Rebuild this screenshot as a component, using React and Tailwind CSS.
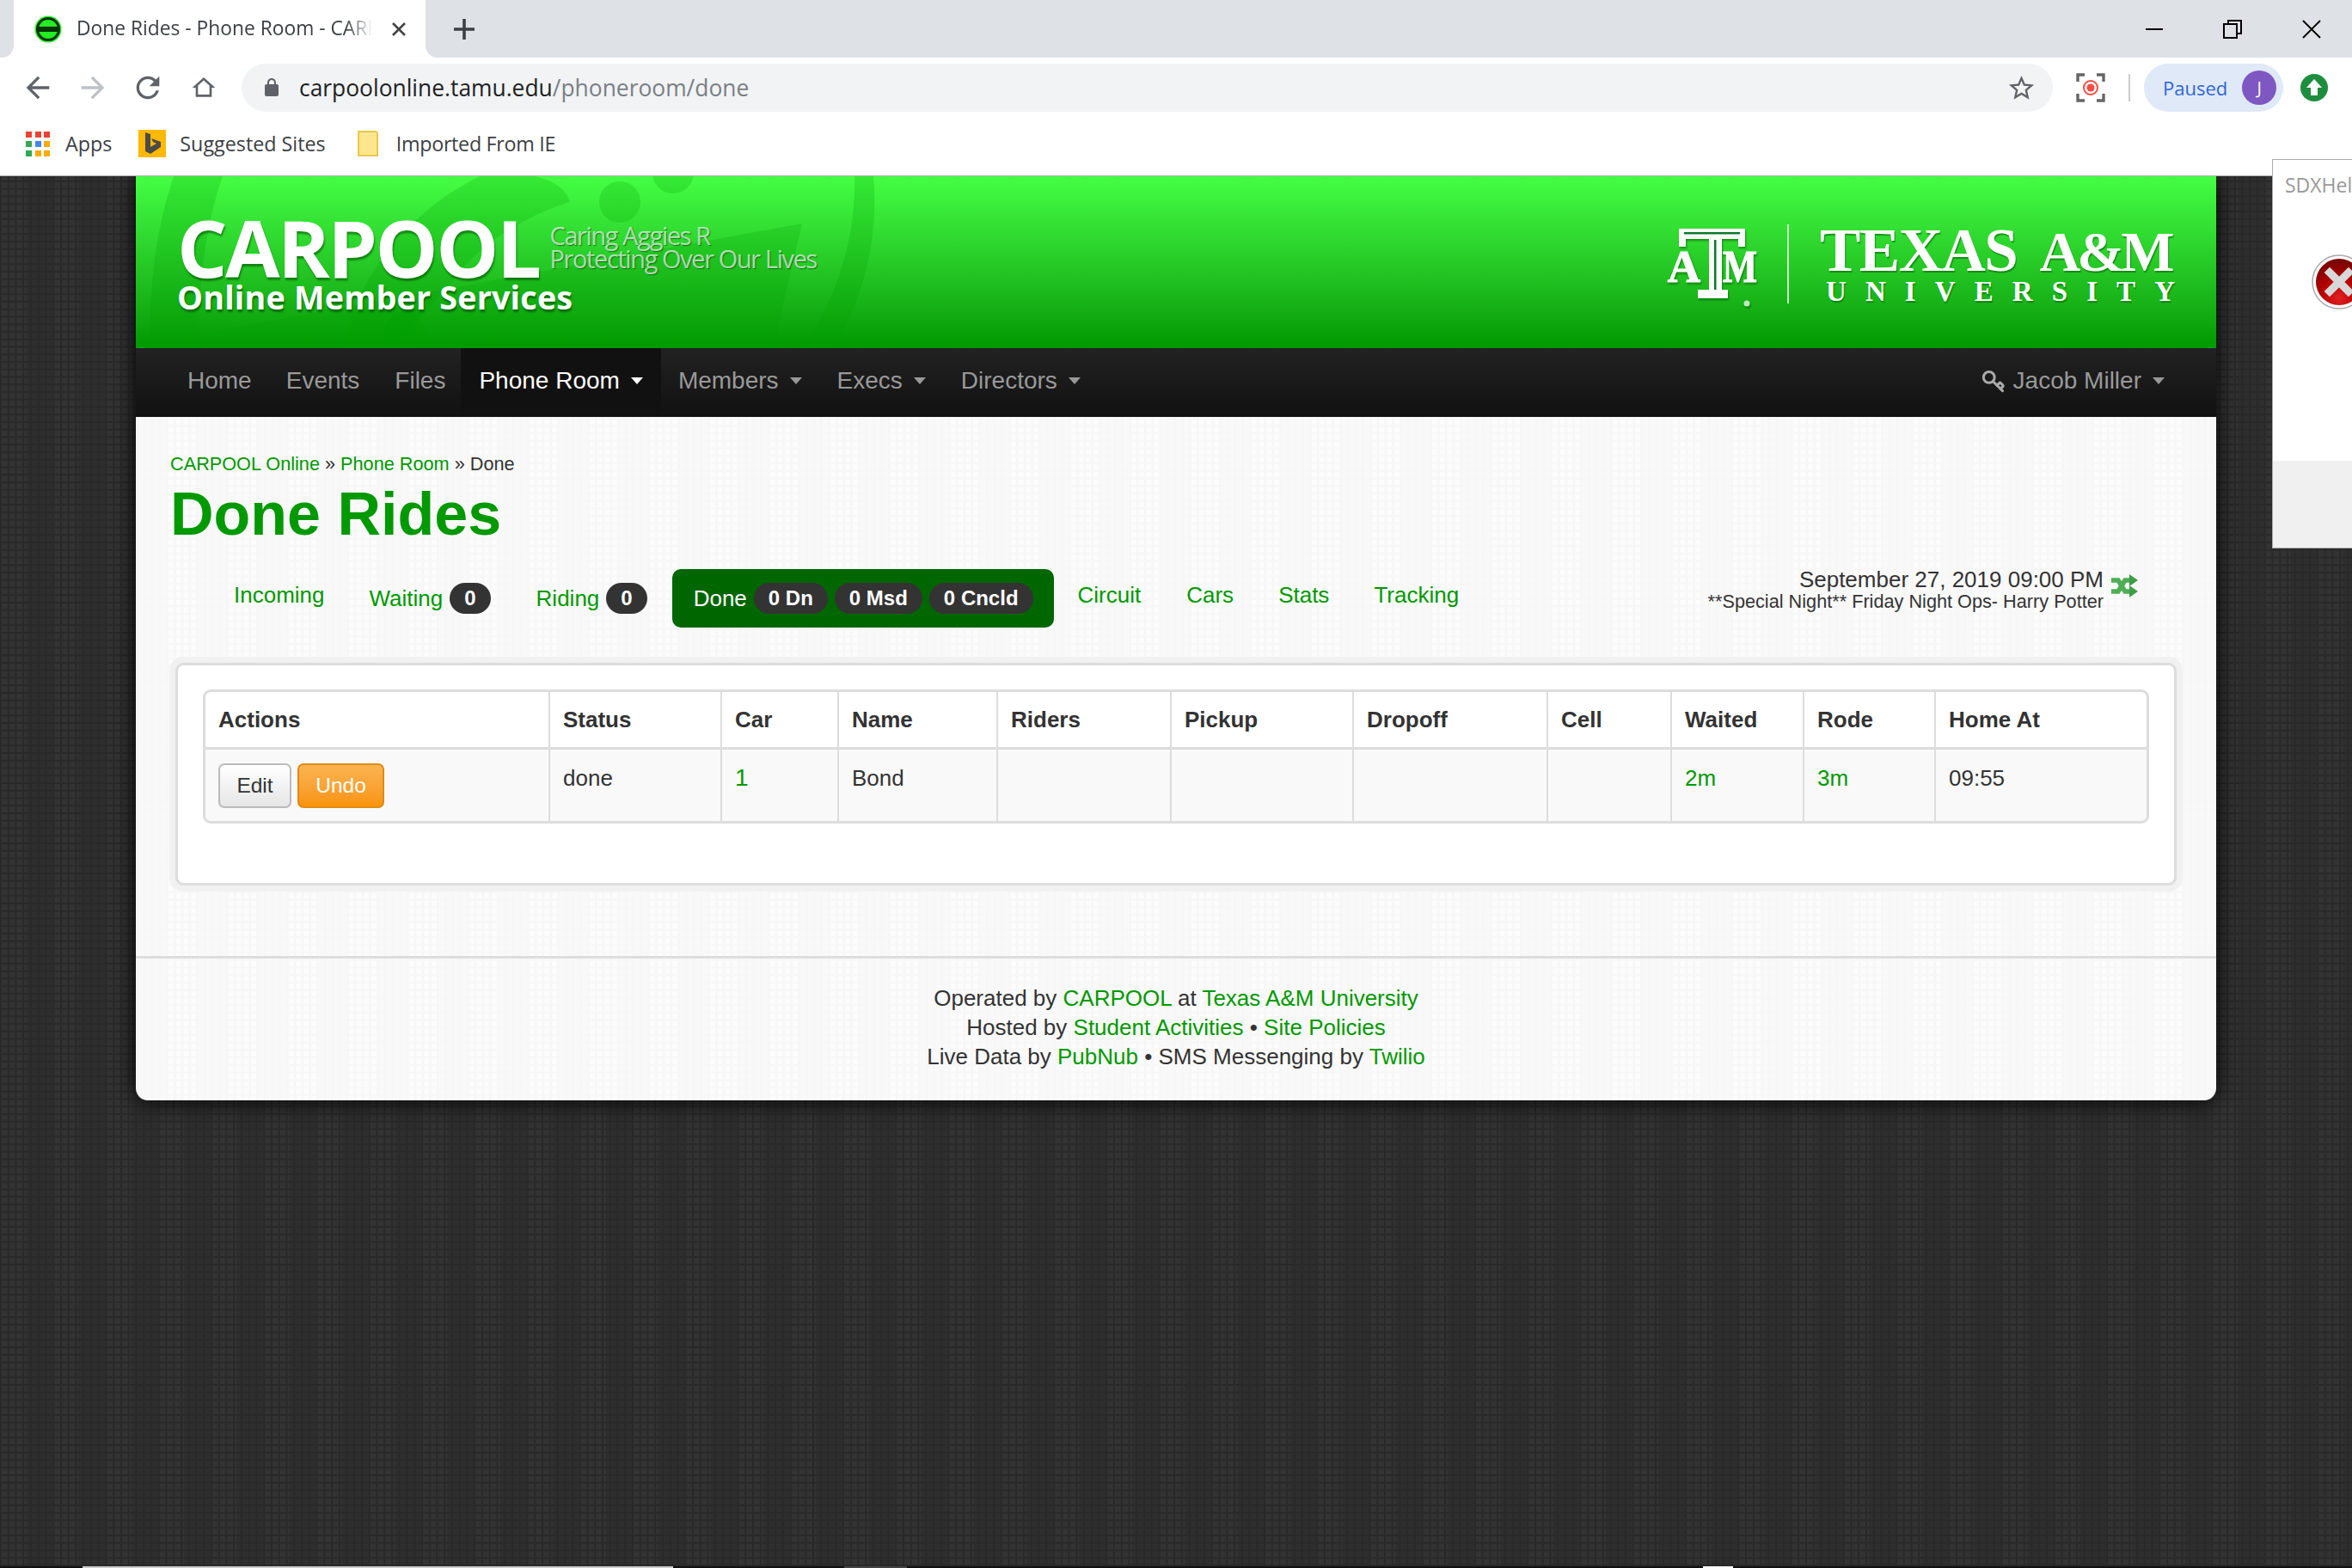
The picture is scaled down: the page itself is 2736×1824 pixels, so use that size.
import React from "react";
import { Key } from "lucide-react";

const P = {
  back: "M20 11H7.83l5.59-5.59L12 4l-8 8 8 8 1.41-1.41L7.83 13H20v-2z",
  fwd: "M12 4l-1.41 1.41L16.17 11H4v2h12.17l-5.58 5.59L12 20l8-8z",
  reload: "M17.65 6.35A7.958 7.958 0 0 0 12 4c-4.42 0-7.99 3.58-7.99 8s3.57 8 7.99 8c3.73 0 6.84-2.55 7.73-6h-2.08A5.99 5.99 0 0 1 12 18c-3.31 0-6-2.69-6-6s2.69-6 6-6c1.66 0 3.14.69 4.22 1.78L13 11h7V4l-2.35 2.35z",
  home: "M12 3L2 12h3v8h14v-8h3L12 3zm5 15H7v-7.81l5-4.5 5 4.5V18z",
  lock: "M18 8h-1V6c0-2.76-2.24-5-5-5S7 3.24 7 6v2H6c-1.1 0-2 .9-2 2v10c0 1.1.9 2 2 2h12c1.1 0 2-.9 2-2V10c0-1.1-.9-2-2-2zM9 6c0-1.66 1.34-3 3-3s3 1.34 3 3v2H9V6z",
  star: "M22 9.24l-7.19-.62L12 2 9.19 8.63 2 9.24l5.46 4.73L5.82 21 12 17.27 18.18 21l-1.63-7.03L22 9.24zM12 15.4l-3.76 2.27 1-4.28-3.32-2.88 4.38-.38L12 6.1l1.71 4.04 4.38.38-3.32 2.88 1 4.28L12 15.4z",
};

function Mi({ d, size, color, className = "" }) {
  return (
    <svg width={size} height={size} viewBox="0 0 24 24" className={"shrink-0 " + className} fill={color}>
      <path d={d} />
    </svg>
  );
}

function Caret({ white }) {
  return (
    <span className={"inline-block ml-[13px] w-0 h-0 border-x-[7.5px] border-t-[8px] border-x-transparent " + (white ? "border-t-white" : "border-t-[#999]")} />
  );
}

function Badge({ children }) {
  return (
    <span className="inline-flex items-center h-[36px] px-[17px] rounded-full bg-[#333] text-white font-bold text-[24px] leading-none">{children}</span>
  );
}

function A({ children, className = "" }) {
  return <a className={"text-[#009900] " + className}>{children}</a>;
}

const cols = [402, 200, 136, 185, 202, 212, 226, 144, 154, 153, 250];
const heads = ["Actions", "Status", "Car", "Name", "Riders", "Pickup", "Dropoff", "Cell", "Waited", "Rode", "Home At"];

function HeaderArt() {
  return (
    <svg className="absolute inset-0" width="2420" height="200" viewBox="0 0 2420 200">
      <g fill="#00a000" fillOpacity="0.22">
        <path d="M44 0 L101 0 C80 60 72 130 74 200 L18 200 C14 130 24 60 44 0 Z" />
        <path d="M836 0 L858 0 C864 70 848 140 811 200 L776 200 C816 140 838 70 836 0 Z" />
        <path d="M82 182 L775 55 L741 200 L82 200 Z" />
        <path d="M400 0 C470 -10 500 10 505 30 C440 50 390 90 370 120 L300 200 L240 200 C260 110 320 40 400 0 Z" />
        <ellipse cx="563" cy="30" rx="24" ry="24" />
        <ellipse cx="625" cy="-4" rx="24" ry="24" />
        <ellipse cx="313" cy="182" rx="24" ry="24" />
      </g>
    </svg>
  );
}

function AtmLogo() {
  return (
    <svg width="119" height="96" viewBox="0 0 119 96" className="shrink-0" style={{ filter: "drop-shadow(1px 2px 1px rgba(0,80,0,.55))" }}>
      <path d="M15 4 H92 V25 H84 V16 H65 V75 H72 V85 H37 V75 H50 V16 H23 V25 H15 Z" fill="#fff" />
      <rect x="56" y="17" width="2.5" height="58" fill="#0a7a2a" />
      <rect x="21" y="8" width="65" height="2.5" fill="#0a7a2a" />
      <text x="21" y="66" textAnchor="middle" fontFamily="'Liberation Serif', serif" fontWeight="700" fontSize="53" stroke="#fff" strokeWidth="1.2" fill="#fff">A</text>
      <text x="66" y="66" textLength="40" lengthAdjust="spacingAndGlyphs" fontFamily="'Liberation Serif', serif" fontWeight="700" fontSize="52" stroke="#fff" strokeWidth="1.2" fill="#fff">M</text>
      <circle cx="94" cy="91" r="3.5" fill="#bfe8bf" />
    </svg>
  );
}

function ShuffleIcon() {
  return (
    <svg width="31" height="27" viewBox="0 0 31 27" className="ml-[9px] mt-[7px] shrink-0">
      <g fill="none" stroke="#4fae55" strokeWidth="5.5">
        <path d="M0 7 H8 L16 20 H22" />
        <path d="M0 20 H8 L16 7 H22" />
      </g>
      <path d="M21 0 L31 7 L21 14 Z M21 13 L31 20 L21 27 Z" fill="#3f9c48" />
    </svg>
  );
}

function ErrorIcon() {
  return (
    <svg width="64" height="64" viewBox="0 0 64 64">
      <defs>
        <radialGradient id="er" cx="0.5" cy="0.85" r="0.8">
          <stop offset="0" stopColor="#e02020" />
          <stop offset="0.55" stopColor="#b00000" />
          <stop offset="1" stopColor="#7a0505" />
        </radialGradient>
      </defs>
      <circle cx="32" cy="32" r="31" fill="#fff" stroke="#a9a9a9" strokeWidth="1.5" />
      <circle cx="32" cy="32" r="27" fill="url(#er)" />
      <path d="M21 21 L43 43 M43 21 L21 43" stroke="#d8d8d8" strokeWidth="9" strokeLinecap="square" />
    </svg>
  );
}

export default function App() {
  const chrome = { fontFamily: "'Open Sans', 'Noto Sans', sans-serif" };
  return (
    <div
      className="relative w-[2736px] h-[1824px] overflow-hidden flex flex-col font-['Liberation_Sans',Arial,sans-serif] bg-[#2e2e2e] bg-[image:linear-gradient(90deg,#292929_0_2px,transparent_2px),linear-gradient(#292929_0_2px,transparent_2px),linear-gradient(90deg,rgba(255,255,255,0.025)_50%,transparent_50%)] bg-size-[8.75px_8.75px,8.75px_8.75px,61.25px_26.25px]"
    >
      {/* Browser chrome */}
      <div className="relative z-10 bg-white shrink-0 border-b border-[#b0b0b0]" style={chrome}>
        <div className="flex h-[67px]">
          <div className="w-[16px] bg-[#dee1e6] rounded-br-[14px]" />
          <div className="w-[479px] bg-white rounded-t-[14px] flex items-center pl-[24px]">
            <svg width="32" height="32" viewBox="0 0 32 32" className="shrink-0">
              <circle cx="16" cy="16" r="15.5" fill="#22ee22" />
              <circle cx="16" cy="16" r="12.5" fill="none" stroke="#063306" strokeWidth="3" />
              <rect x="3" y="13" width="26" height="6" fill="#063306" />
            </svg>
            <span className="ml-[17px] w-[348px] overflow-hidden whitespace-nowrap text-[22.8px] text-[#3c4043] [mask-image:linear-gradient(90deg,black_90%,transparent_99%)]">
              Done Rides - Phone Room - CARPOOL
            </span>
            <svg width="18" height="18" viewBox="0 0 18 18" className="ml-[18px] shrink-0" stroke="#444" strokeWidth="2.6">
              <path d="M2 2 L16 16 M16 2 L2 16" />
            </svg>
          </div>
          <div className="flex-1 bg-[#dee1e6] rounded-bl-[14px] flex items-center pl-[33px]">
            <svg width="24" height="24" viewBox="0 0 24 24" stroke="#3c4043" strokeWidth="3.6">
              <path d="M12 0 V24 M0 12 H24" />
            </svg>
            <div className="ml-auto flex items-center mr-[36px] gap-[70px]">
              <span className="block w-[20px] h-[2px] bg-black" />
              <svg width="22" height="22" viewBox="0 0 22 22" fill="none" stroke="#000" strokeWidth="2">
                <rect x="1" y="5" width="15" height="16" />
                <path d="M6 5 V1 H21 V16 H16" />
              </svg>
              <svg width="22" height="22" viewBox="0 0 22 22" fill="none" stroke="#000" strokeWidth="1.8">
                <path d="M1 1 L21 21 M21 1 L1 21" />
              </svg>
            </div>
          </div>
        </div>
        <div className="flex items-center h-[70px]">
          <div className="ml-[24px] flex items-center gap-[24px] w-[232px]">
            <Mi d={P.back} size={40} color="#5f6368" />
            <Mi d={P.fwd} size={40} color="#bdc1c6" />
            <Mi d={P.reload} size={40} color="#5f6368" />
            <Mi d={P.home} size={32} color="#5f6368" className="ml-[5px]" />
          </div>
          <div className="ml-[25px] w-[2107px] h-[56px] rounded-full bg-[#f1f3f4] flex items-center pl-[23px] pr-[19px]">
            <Mi d={P.lock} size={24} color="#5f6368" />
            <span className="ml-[20px] pt-[2px] text-[26.4px] text-[#202124]">
              carpoolonline.tamu.edu<span className="text-[#7a7f85]">/phoneroom/done</span>
            </span>
            <span className="ml-auto"><Mi d={P.star} size={35} color="#5f6368" /></span>
          </div>
          <svg width="34" height="34" viewBox="0 0 34 34" className="ml-[27px] shrink-0" fill="none">
            <path d="M10 2 H2 V10 M24 2 H32 V10 M10 32 H2 V24 M24 32 H32 V24" stroke="#666" strokeWidth="3.4" />
            <circle cx="17" cy="17" r="8" stroke="#f44b42" strokeWidth="2" />
            <circle cx="17" cy="17" r="4.5" fill="#f44b42" />
          </svg>
          <span className="ml-[27px] w-[2px] h-[32px] bg-[#ccc]" />
          <div className="ml-[16px] w-[162px] h-[56px] rounded-full bg-[#e0e9f8] flex items-center pl-[22px]">
            <span className="text-[22px] text-[#2f66d6]">Paused</span>
            <span className="ml-[17px] w-[40px] h-[40px] rounded-full bg-[#7e57c2] text-white text-[20px] flex items-center justify-center">J</span>
          </div>
          <svg width="32" height="32" viewBox="0 0 32 32" className="ml-[20px] shrink-0">
            <circle cx="16" cy="16" r="16" fill="#1e8e3e" />
            <path d="M16 6 L25 16 H20 V25 H12 V16 H7 Z" fill="#fff" />
          </svg>
        </div>
        <div className="flex items-center h-[67px] pb-[7px] pl-[31px] text-[23.3px] text-[#3c4043]">
          <div className="grid grid-cols-3 gap-[6px] w-[26px] shrink-0">
            {["#ea4335", "#ea4335", "#ea4335", "#34a853", "#4285f4", "#f9ab00", "#34a853", "#f9ab00", "#f9ab00"].map((c, i) => (
              <span key={i} className="w-[5px] h-[5px] scale-[1.4]" style={{ background: c }} />
            ))}
          </div>
          <span className="ml-[19px]">Apps</span>
          <svg width="32" height="32" viewBox="0 0 32 32" className="ml-[31px] shrink-0">
            <rect width="32" height="32" fill="#ffb900" />
            <path d="M8 3 L14 5 V20 L21 16 L17 14 L15 10 L26 14 V20 L14 28 L8 25 Z" fill="#4b4b4b" />
          </svg>
          <span className="ml-[16px]">Suggested Sites</span>
          <svg width="26" height="30" viewBox="0 0 26 30" className="ml-[37px] shrink-0">
            <path d="M1 1 H20 Q23 1 23 4 V29 H1 Z" fill="#fde68d" stroke="#e9c84c" strokeWidth="2" />
          </svg>
          <span className="ml-[19px] tracking-[-0.3px]">Imported From IE</span>
        </div>
      </div>

      {/* Site */}
      <div className="flex-1 min-h-0">
        <div className="ml-[158px] w-[2420px] rounded-b-[14px] overflow-hidden shadow-[0_0_28px_#000] bg-[#fcfcfc] bg-[image:linear-gradient(90deg,#f7f7f7_0_3px,transparent_3px),linear-gradient(#f8f8f8_0_3px,transparent_3px),linear-gradient(90deg,rgba(0,0,0,0.012)_50%,transparent_50%)] bg-size-[8.75px_8.75px,8.75px_8.75px,70px_26.25px] text-[#333] text-[26px]">
          {/* Banner */}
          <header className="relative h-[200px] bg-gradient-to-b from-[#44ff44] to-[#009900] text-white overflow-hidden">
            <HeaderArt />
            <div className="relative h-full flex justify-between pl-[48px] pr-[48px]">
              <div className="pt-[33px]">
                <div className="flex items-start" style={{ fontFamily: "'Open Sans', sans-serif" }}>
                  <span className="text-[92px] font-bold leading-[100px] tracking-[-2.5px] [text-shadow:1px_3px_2px_rgba(0,60,0,0.5)]">CARPOOL</span>
                  <div className="ml-[12px] mt-[22px] text-[29px] leading-[27px] tracking-[-1.4px] text-white/65 [text-shadow:1px_1px_1px_rgba(0,60,0,0.6)]">
                    <div>Caring Aggies R</div>
                    <div>Protecting Over Our Lives</div>
                  </div>
                </div>
                <div className="-mt-[14px] text-[37.7px] font-bold leading-[44px] tracking-[0.2px] [text-shadow:1px_3px_2px_rgba(0,60,0,0.55)]" style={{ fontFamily: "'Open Sans', sans-serif" }}>
                  Online Member Services
                </div>
              </div>
              <div className="flex items-start pt-[57px] font-['Liberation_Serif',serif]">
                <AtmLogo />
                <span className="ml-[22px] -mt-[1px] w-[2px] h-[92px] bg-white/75" />
                <div className="ml-[36px] w-[413px] [text-shadow:1px_2px_1px_rgba(0,80,0,0.5)]">
                  <div className="text-[71px] font-bold leading-[58px] tracking-[-1.5px] [word-spacing:10px] whitespace-nowrap">TEXAS <span className="text-[66px] tracking-[-4px]">A&amp;M</span></div>
                  <div className="mt-[1px] pl-[7px] flex justify-between text-[33px] font-bold leading-[32px]">
                    {"UNIVERSITY".split("").map((c, i) => <span key={i}>{c}</span>)}
                  </div>
                </div>
              </div>
            </div>
          </header>

          {/* Nav */}
          <nav className="h-[80px] bg-gradient-to-b from-[#222] to-[#111] flex items-stretch pl-[39px] pr-[39px] text-[28px] text-[#999]">
            <a className="flex items-center pb-[5px] px-[21px]">Home</a>
            <a className="flex items-center pb-[5px] px-[19px]">Events</a>
            <a className="flex items-center pb-[5px] pl-[22px] pr-[18px]">Files</a>
            <a className="flex items-center pb-[5px] pl-[21px] pr-[21px] bg-[#111] text-white">Phone Room<Caret white /></a>
            <a className="flex items-center pb-[5px] px-[20px]">Members<Caret /></a>
            <a className="flex items-center pb-[5px] pl-[21px] pr-[20px]">Execs<Caret /></a>
            <a className="flex items-center pb-[5px] pl-[21px] pr-[20px]">Directors<Caret /></a>
            <a className="ml-auto flex items-center pb-[5px] px-[21px]">
              <Key size={28} strokeWidth={2.6} className="-scale-y-100 mr-[9px] text-[#aaa]" />
              Jacob Miller<Caret />
            </a>
          </nav>

          {/* Content */}
          <main className="px-[40px] pt-[40px]">
            <div className="text-[21.7px] leading-[30px]">
              <A>CARPOOL Online</A> » <A>Phone Room</A> » Done
            </div>
            <h1 className="text-[70px] font-bold text-[#009900] leading-[70px] mt-[8px]">Done Rides</h1>

            <div className="flex items-center h-[68px] mt-[29px] pl-[49px] gap-[5px]">
              <A className="pl-[25px] pr-[22px] pb-[8px]">Incoming</A>
              <A className="pl-[25px] pr-[25px] flex items-center gap-[8px]">Waiting <Badge>0</Badge></A>
              <A className="pl-[23px] pr-[24px] flex items-center gap-[8px]">Riding <Badge>0</Badge></A>
              <div className="h-full rounded-[10px] bg-[#006600] text-white flex items-center gap-[8px] pl-[25px] pr-[24px]">
                <span>Done</span>
                <Badge>0 Dn</Badge>
                <Badge>0 Msd</Badge>
                <Badge>0 Cncld</Badge>
              </div>
              <A className="pl-[23px] pr-[23px] pb-[8px]">Circuit</A>
              <A className="pl-[25px] pr-[22px] pb-[8px]">Cars</A>
              <A className="pl-[25px] pr-[22px] pb-[8px]">Stats</A>
              <A className="pl-[25px] pr-[22px] pb-[8px]">Tracking</A>
              <div className="ml-auto mr-[51px] self-start flex items-start -mt-[1px]">
                <div className="text-right">
                  <div className="leading-[26px]">September 27, 2019 09:00 PM</div>
                  <div className="text-[21.7px] leading-[26px]">**Special Night** Friday Night Ops- Harry Potter</div>
                </div>
                <ShuffleIcon />
              </div>
            </div>

            {/* Well */}
            <section className="mt-[41px] mx-[6px] h-[259px] bg-white rounded-[9px] border-[3px] border-[#ddd] shadow-[0_0_0_7px_#f1f1f1] pt-[28px] px-[29px]">
              <table className="table-fixed border-separate border-spacing-0 w-[2264px]">
                <colgroup>
                  {cols.map((w, i) => <col key={i} style={{ width: w }} />)}
                </colgroup>
                <thead>
                  <tr>
                    {heads.map((h, i) => (
                      <th key={h} className={"h-[70px] text-left font-bold pl-[15px] border-t-[3px] border-b-[3px] border-[#ddd] " + (i === 0 ? "border-l-[3px] rounded-tl-[9px]" : "border-l-2") + (i === 10 ? " border-r-[3px] rounded-tr-[9px]" : "")}>
                        {h}
                      </th>
                    ))}
                  </tr>
                </thead>
                <tbody>
                  <tr className="bg-[#f9f9f9]">
                    {[
                      <div className="flex gap-[7px] items-center pt-[2px]" key="a">
                        <button className="w-[85px] h-[52px] rounded-[7px] border-2 border-[#bbb] bg-gradient-to-b from-white to-[#e6e6e6] text-[#333] text-[24.5px]">Edit</button>
                        <button className="w-[101px] h-[52px] rounded-[7px] border-2 border-[#e08a15] bg-gradient-to-b from-[#fbb450] to-[#f89406] text-white text-[24.5px]">Undo</button>
                      </div>,
                      "done",
                      <A key="c" className="text-[28px] leading-[28px]">1</A>,
                      "Bond",
                      "",
                      "",
                      "",
                      "",
                      <A key="w">2m</A>,
                      <A key="r">3m</A>,
                      "09:55",
                    ].map((c, i) => (
                      <td key={i} className={"h-[86px] align-top pl-[15px] border-b-[3px] border-[#ddd] " + (i === 0 ? "border-l-[3px] rounded-bl-[9px] pt-[14px]" : "border-l-2 pt-[14px]") + (i === 10 ? " border-r-[3px] rounded-br-[9px]" : "")}>
                        {c}
                      </td>
                    ))}
                  </tr>
                </tbody>
              </table>
            </section>
          </main>

          {/* Footer */}
          <footer className="mt-[82px] border-t-[3px] border-[#ddd] pt-[29px] pb-[34px] text-center leading-[34px]">
            <div>Operated by <A>CARPOOL</A> at <A>Texas A&amp;M University</A></div>
            <div>Hosted by <A>Student Activities</A> • <A>Site Policies</A></div>
            <div>Live Data by <A>PubNub</A> • SMS Messenging by <A>Twilio</A></div>
          </footer>
        </div>
      </div>

      {/* Desktop edge below the window */}
      <div className="relative shrink-0 h-[2px] bg-[#111]">
        <span className="absolute left-[96px] w-[687px] h-full bg-[#ccc]" />
        <span className="absolute left-[982px] w-[73px] h-full bg-[#444]" />
        <span className="absolute left-[1981px] w-[35px] h-full bg-white" />
      </div>

      {/* Error dialog lying over the page */}
      <div className="absolute z-20 left-[2643px] top-[185px] w-[93px] h-[453px] bg-white border border-[#aaa] border-r-0 flex flex-col" style={chrome}>
        <div className="flex-1 relative overflow-hidden">
          <span className="absolute left-[14px] top-[12px] text-[23px] text-[#999] whitespace-nowrap">SDXHelper</span>
          <span className="absolute left-[45px] top-[110px]"><ErrorIcon /></span>
        </div>
        <div className="h-[101px] bg-[#f0f0f0]" />
      </div>
    </div>
  );
}
